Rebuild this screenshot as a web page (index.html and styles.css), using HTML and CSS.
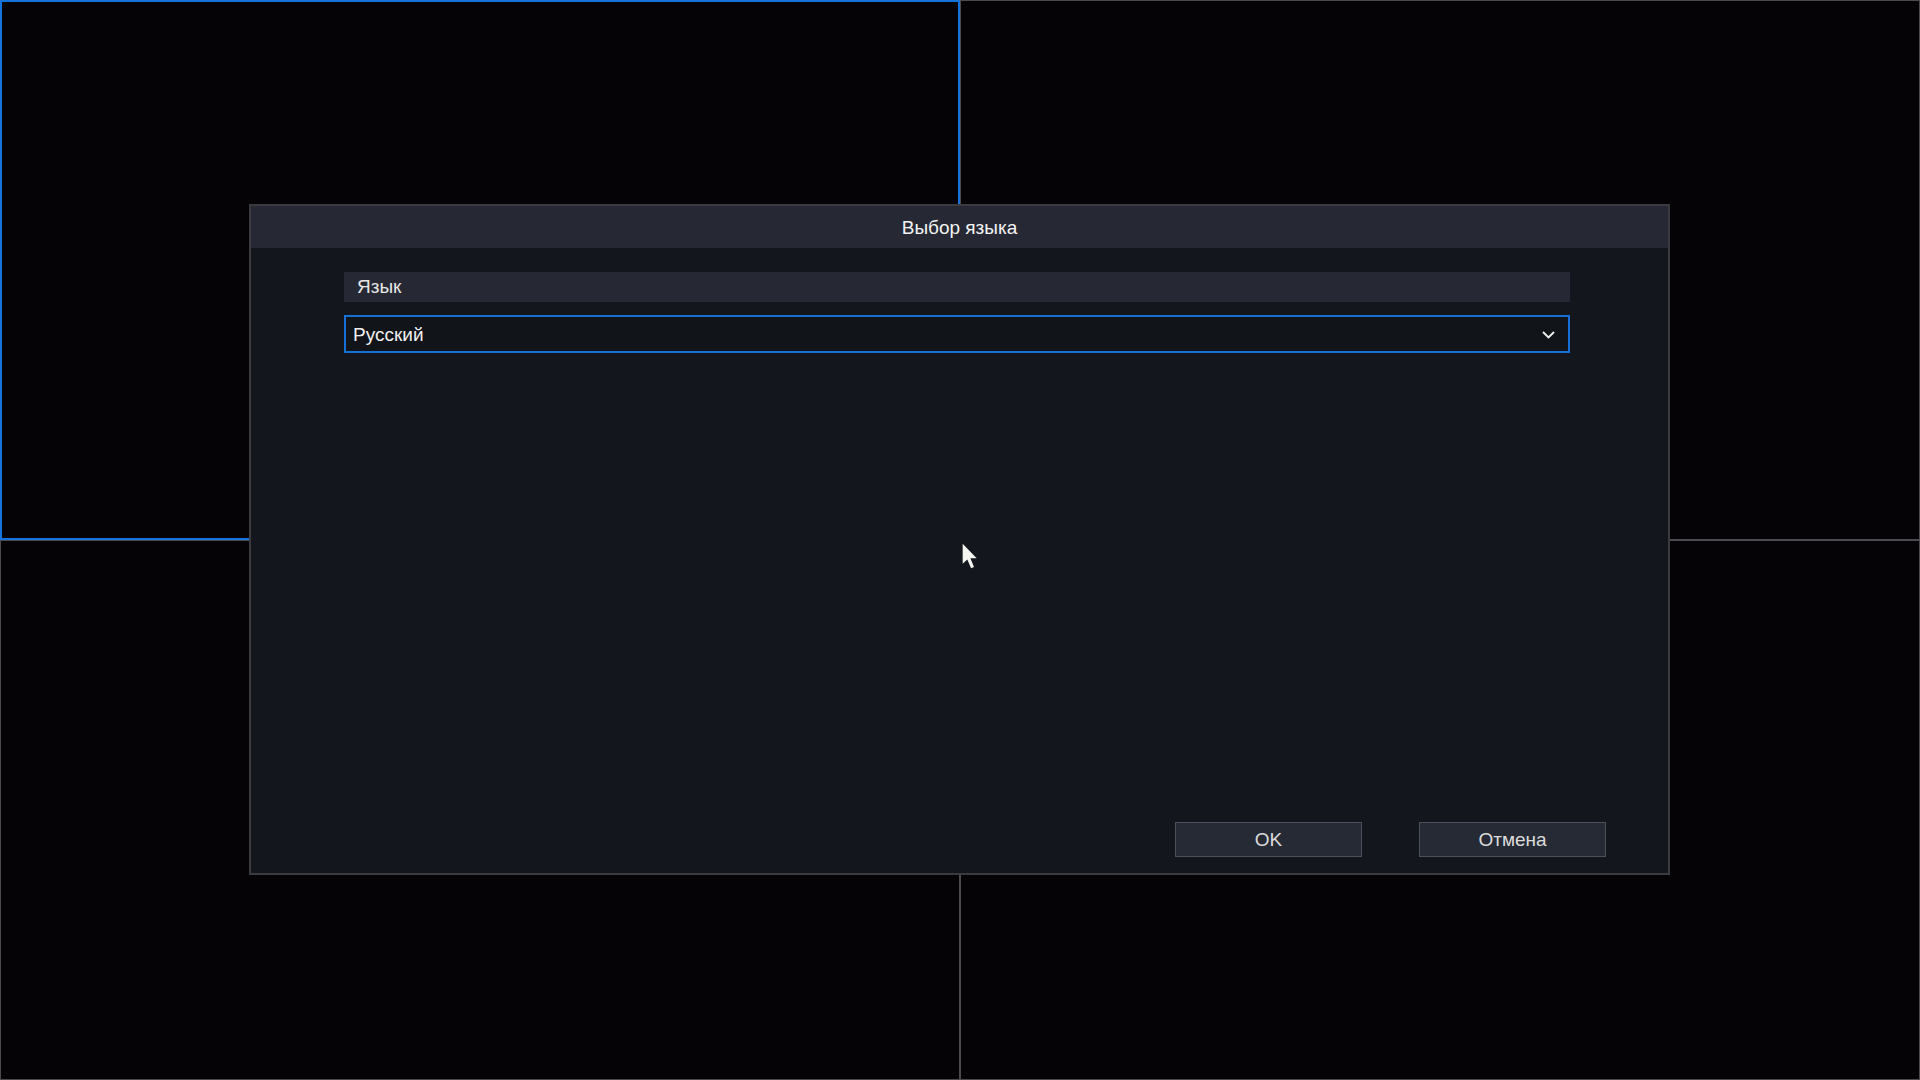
FILE: index.html
```html
<!DOCTYPE html>
<html lang="ru">
<head>
<meta charset="utf-8">
<title>Выбор языка</title>
<link rel="stylesheet" href="styles.css">
</head>
<body>
<div class="screen">
  <div class="cells">
    <div class="cell cell-active"></div>
    <div class="cell"></div>
    <div class="cell"></div>
    <div class="cell"></div>
  </div>

  <div class="dialog">
    <div class="dialog-title">Выбор языка</div>
    <div class="dialog-body">
      <div class="field-label">Язык</div>
      <div class="select">
        <span class="select-value">Русский</span>
        <svg class="chevron" width="13" height="8" viewBox="0 0 13 8"><path d="M1 1 L6.5 6.5 L12 1" fill="none" stroke="#f2f2f2" stroke-width="1.8"/></svg>
      </div>
      <div class="spacer"></div>
      <div class="dialog-footer">
        <button class="btn">OK</button>
        <button class="btn">Отмена</button>
      </div>
    </div>
  </div>

  <svg class="cursor" width="16" height="27" viewBox="0 0 12 20"><path d="M0.5 0.5 L0.5 15.5 L4 12.2 L6.8 18.8 L9 17.8 L6.3 11.4 L11 11.4 Z" fill="#f4f4f0"/></svg>
</div>
</body>
</html>
```

FILE: styles.css
```css
html, body {
  margin: 0;
  padding: 0;
  background: #050306;
}

.screen {
  position: relative;
  width: 1920px;
  height: 1080px;
  overflow: hidden;
  font-family: "Liberation Sans", Arial, sans-serif;
}

.cells {
  display: grid;
  grid-template-columns: 960px 960px;
  grid-template-rows: 540px 540px;
  width: 1920px;
  height: 1080px;
}

.cell {
  box-sizing: border-box;
  border: 1px solid #4a4a50;
  background: #050306;
}

.cell-active {
  border: 2px solid #1673dc;
}

.dialog {
  position: absolute;
  left: 249px;
  top: 204px;
  width: 1421px;
  height: 671px;
  box-sizing: border-box;
  border: 2px solid #3a3b41;
  background: #13161d;
  display: flex;
  flex-direction: column;
}

.dialog-title {
  height: 42px;
  background: #262833;
  color: #f4f4f4;
  font-size: 19px;
  display: flex;
  align-items: center;
  justify-content: center;
  padding-top: 1px;
  box-sizing: border-box;
}

.dialog-body {
  flex: 1;
  display: flex;
  flex-direction: column;
  padding: 24px 0 16px 93px;
}

.field-label {
  width: 1226px;
  height: 30px;
  box-sizing: border-box;
  background: #262934;
  color: #e6e6e6;
  font-size: 19px;
  display: flex;
  align-items: center;
  padding-left: 13px;
}

.select {
  margin-top: 13px;
  width: 1226px;
  height: 38px;
  box-sizing: border-box;
  border: 2px solid #1670d8;
  background: #111419;
  color: #f0f0f0;
  font-size: 19px;
  display: flex;
  align-items: center;
  justify-content: space-between;
  padding: 1px 13px 0 7px;
}

.chevron {
  display: block;
}

.spacer {
  flex: 1;
}

.dialog-footer {
  display: flex;
  justify-content: flex-end;
  gap: 57px;
  padding-right: 62px;
}

.btn {
  width: 187px;
  height: 35px;
  box-sizing: border-box;
  border: 1px solid #4d5058;
  background: #262a35;
  color: #dcdcdc;
  font-family: "Liberation Sans", Arial, sans-serif;
  font-size: 19px;
  padding: 0;
}

.cursor {
  position: absolute;
  left: 962px;
  top: 543px;
}
```
